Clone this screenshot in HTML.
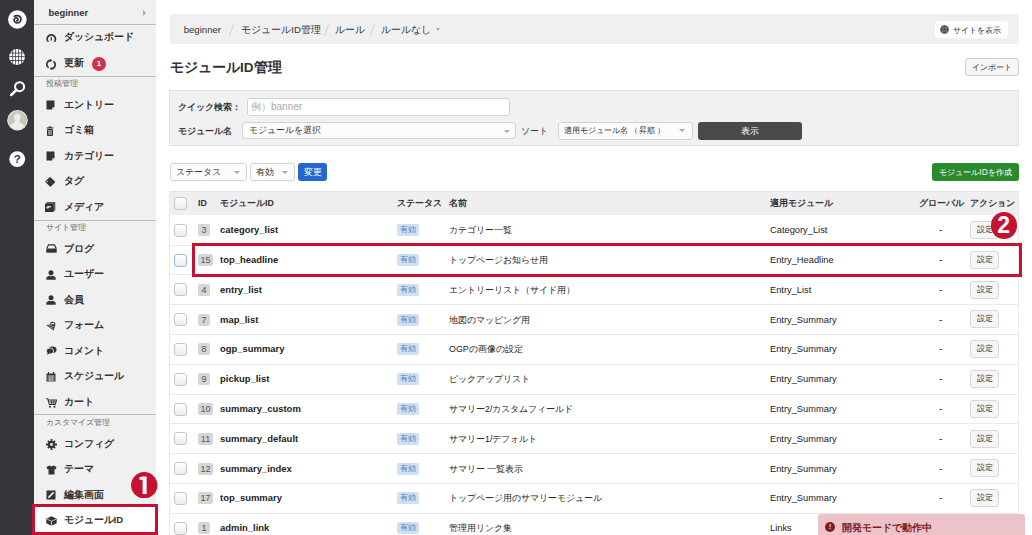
<!DOCTYPE html><html><head><meta charset="utf-8"><style>
*{box-sizing:border-box;margin:0;padding:0}
html,body{width:1032px;height:535px;overflow:hidden;background:#fff}
body{position:relative;font-family:"Liberation Sans",sans-serif;color:#333}
.a{position:absolute}
.bar{left:0;top:0;width:34px;height:535px;background:#36353b}
.side{left:34px;top:0;width:122px;height:535px;background:#f0f0f0}
.sline{left:34px;width:122px;height:1px;background:#bcbcbc}
.sitem{left:63.5px;font-size:9.6px;font-weight:bold;color:#333;line-height:14px;white-space:nowrap}
.slabel{left:45.5px;font-size:7.5px;color:#6a6a6a;line-height:10px;white-space:nowrap}
.sicon{left:46px;line-height:0}
.crumb{left:170px;top:14px;width:849px;height:30px;background:#f0f0f0;border-radius:3px}
.ctext{top:22px;font-size:9.6px;color:#333;line-height:14px;white-space:nowrap}
.sep{color:#c8c8c8}
.btn{border:1px solid #cfcfcf;background:#f6f6f6;border-radius:3px;font-size:8.4px;color:#333;text-align:center;white-space:nowrap}
.filter{left:169px;top:90px;width:850px;height:56px;background:#f1f1f1;border:1px solid #e3e3e3}
.inp{background:#fff;border:1px solid #d3d3d3;border-radius:3px}
.lbl{font-size:9.2px;color:#3a3a3a;font-weight:bold;line-height:14px;white-space:nowrap}
.sel{background:#fcfcfc;border:1px solid #d3d3d3;border-radius:3px;font-size:8.6px;color:#333;white-space:nowrap}
.arr{position:absolute;top:6.5px;width:0;height:0;border-left:3px solid transparent;border-right:3px solid transparent;border-top:3.5px solid #aaa}
.thead{left:169px;top:191px;width:850px;height:24.3px;background:#efefef;border-top:1px solid #e2e2e2}
.th{top:196px;font-size:8.9px;font-weight:bold;color:#333;line-height:14px;white-space:nowrap}
.rowline{left:169px;width:850px;height:1px;background:#e9e9e9}
.cb{left:174px;width:13px;height:13px;border:1px solid #c6c6c6;border-radius:3px;background:linear-gradient(#fff,#ececec)}
.idb{left:198px;height:12px;background:#d6d6d6;border-radius:2px;font-size:9px;color:#555;text-align:center;line-height:12px}
.mid{left:220px;font-size:9.45px;font-weight:bold;color:#222;line-height:14px;white-space:nowrap}
.badge{left:397px;width:22px;height:12px;background:#cfe0f4;border-radius:2px;font-size:8px;color:#4b80c4;text-align:center;line-height:12px}
.nm{left:449px;font-size:8.9px;color:#222;line-height:14px;white-space:nowrap}
.mod{left:770px;font-size:9.3px;color:#222;line-height:14px;white-space:nowrap}
.dash{left:939px;font-size:10px;color:#333;line-height:14px}
.set{left:970px;width:29px;height:18px;font-size:7.9px;line-height:16px;border-color:#d8d8d8}
.red{border:3px solid #c41230}
.num{width:26.5px;height:26.5px;border-radius:50%;background:#c41230;color:#fff;font-weight:bold;font-size:23px;text-align:center;line-height:27px}
</style></head><body>
<div class="a bar"></div>
<div class="a" style="left:8px;top:9.5px;line-height:0"><svg width="19" height="19" viewBox="0 0 19 19"><circle cx="9.35" cy="9.5" r="9.3" fill="#fff"/><path d="M6.3 6.2 C7.2 5.6 8.4 5.5 9.6 5.6 C11.7 5.8 13 7.6 12.9 9.7 C12.8 11.8 11.1 13.1 9.2 13 C7.3 12.9 6 11.5 6.1 9.8 C6.2 8.4 7.4 7.7 8.6 7.9 C9.7 8.1 10.3 9.1 10 10 C9.8 10.6 9.2 10.9 8.7 10.8" fill="none" stroke="#36353b" stroke-width="1.7" stroke-linecap="round"/></svg></div>
<div class="a" style="left:9px;top:48.5px;line-height:0"><svg width="16" height="16" viewBox="0 0 16 16"><defs><clipPath id="gc"><circle cx="8" cy="8" r="7.9"/></clipPath></defs><circle cx="8" cy="8" r="7.9" fill="#fff"/><g clip-path="url(#gc)" stroke="#36353b" stroke-width="0.8" fill="none"><path d="M0 4h16M0 7.6h16M0 11.5h16M3.7 0v16M6.6 0v16M9.6 0v16M12.5 0v16"/></g></svg></div>
<div class="a" style="left:9px;top:80px;line-height:0"><svg width="17" height="17" viewBox="0 0 17 17"><circle cx="10.55" cy="6.7" r="4.5" fill="none" stroke="#fff" stroke-width="2.1"/><path d="M7.5 9.8 L2.2 15" stroke="#fff" stroke-width="2.5" stroke-linecap="round"/></svg></div>
<div class="a" style="left:7px;top:110px;line-height:0"><svg width="21" height="21" viewBox="0 0 21 21"><defs><clipPath id="ac"><circle cx="10.5" cy="10.3" r="9.5"/></clipPath></defs><circle cx="10.5" cy="10.3" r="10.3" fill="#ebebe6"/><circle cx="10.5" cy="10.3" r="9.4" fill="#c7c7bc"/><g clip-path="url(#ac)" fill="#ededea"><ellipse cx="10.2" cy="7.3" rx="3.3" ry="3.8"/><path d="M8.2 10 L12.2 10 L12.6 12.5 C16 13.2 18 14.5 18 21 H3 C3 14.5 5 13.2 7.8 12.5Z"/></g></svg></div>
<div class="a" style="left:9px;top:151px;line-height:0"><svg width="17" height="17" viewBox="0 0 17 17"><circle cx="8.2" cy="8.2" r="7.9" fill="#fff"/><text x="8.3" y="12.4" text-anchor="middle" font-family="Liberation Sans" font-weight="bold" font-size="11.5" fill="#36353b">?</text></svg></div>
<div class="a side"></div>
<div class="a" style="left:48.5px;top:5.6px;font-size:9.4px;font-weight:bold;color:#333;line-height:14px">beginner</div>
<div class="a" style="left:143.3px;top:9.6px;width:0;height:0;border-top:3px solid transparent;border-bottom:3px solid transparent;border-left:3px solid #aaa"></div>
<div class="a" style="left:34px;top:507px;width:122px;height:28px;background:#fff"></div>
<div class="a sline" style="top:24.0px"></div>
<div class="a sicon" style="top:32.5px"><svg width="11" height="9" viewBox="0 0 11 9"><path d="M1.6 7.7 A4.1 4.1 0 1 1 9 7.7" fill="none" stroke="#333" stroke-width="1.7"/><path d="M0.8 8.1 H2.8 M7.8 8.1 H9.8" stroke="#333" stroke-width="1.4"/><path d="M5.3 4.2 V7.6" stroke="#333" stroke-width="1.3"/></svg></div>
<div class="a sitem" style="top:30.0px">ダッシュボード</div>
<div class="a sicon" style="top:58.5px"><svg width="10" height="11" viewBox="0 0 10 11"><path d="M5 1.3 A4 4 0 0 0 2.6 8.6" fill="none" stroke="#333" stroke-width="1.7"/><path d="M5 9.7 A4 4 0 0 0 7.4 2.4" fill="none" stroke="#333" stroke-width="1.7"/><path d="M4 0 L6.5 1.4 L4 2.8Z M6 11 L3.5 9.6 L6 8.2Z" fill="#333"/></svg></div>
<div class="a sitem" style="top:56.0px">更新</div>
<div class="a sline" style="top:76.0px"></div>
<div class="a slabel" style="top:79.0px">投稿管理</div>
<div class="a sicon" style="top:100.2px"><svg width="9" height="10" viewBox="0 0 9 10"><path d="M0.5 0.5h8v6.5l-2.5 2.5h-5.5z" fill="#333"/><path d="M6 9.5l2.5-2.5h-2.5z" fill="#aaa"/></svg></div>
<div class="a sitem" style="top:97.7px">エントリー</div>
<div class="a sicon" style="top:125.5px"><svg width="8" height="10" viewBox="0 0 8 10"><path d="M2.5 0.5h3v1h2v1h-7v-1h2z" fill="#333"/><rect x="1" y="3" width="6" height="7" rx="1" fill="#333"/><path d="M3 4v5M5 4v5" stroke="#f0f0f0" stroke-width="0.9"/></svg></div>
<div class="a sitem" style="top:123.0px">ゴミ箱</div>
<div class="a sicon" style="top:151.0px"><svg width="9" height="10" viewBox="0 0 9 10"><path d="M0.5 0.5h8v6.5l-2.5 2.5h-5.5z" fill="#333"/><path d="M6 9.5l2.5-2.5h-2.5z" fill="#aaa"/></svg></div>
<div class="a sitem" style="top:148.5px">カテゴリー</div>
<div class="a sicon" style="top:176.5px"><svg width="11" height="11" viewBox="0 0 11 11" style="overflow:visible;margin-left:-0.7px;margin-top:-0.5px"><path d="M0.4 5.2 L4.6 1.2 Q5 0.9 5.4 1.2 L10 5.6 Q10.3 6 10 6.4 L5.8 10.6 Q5.3 11 4.9 10.6 L0.4 6 Q0 5.6 0.4 5.2Z" fill="#333"/><circle cx="2.2" cy="5.5" r="0.7" fill="#ddd"/><path d="M3.5 4 L7.5 8 M5 2.8 L9 6.8" stroke="#4a4a4a" stroke-width="0.6"/></svg></div>
<div class="a sitem" style="top:174.0px">タグ</div>
<div class="a sicon" style="top:202.1px"><svg width="11" height="10" viewBox="0 0 11 10" style="overflow:visible;margin-left:-0.7px;margin-top:-0.3px"><path d="M0 2 L2 0 H10.3 V8 L8.3 10 H0Z" fill="#5a5a5a"/><rect x="0" y="2" width="8.3" height="8" fill="#333"/><path d="M1.5 6.5 C1.2 5 2 4 3.2 4 H6 V5.2 H4.2 C4 6.2 3 6.8 1.5 6.5Z" fill="#e6e6e6"/></svg></div>
<div class="a sitem" style="top:199.6px">メディア</div>
<div class="a sline" style="top:219.5px"></div>
<div class="a slabel" style="top:223.0px">サイト管理</div>
<div class="a sicon" style="top:244.2px"><svg width="11" height="9" viewBox="0 0 11 9"><path d="M0.8 4.5 L2.5 0.8 H8.5 L10.2 4.5" fill="none" stroke="#333" stroke-width="1.2"/><rect x="0.3" y="4.5" width="10.4" height="4.2" fill="#333"/></svg></div>
<div class="a sitem" style="top:241.7px">ブログ</div>
<div class="a sicon" style="top:269.5px"><svg width="10" height="10" viewBox="0 0 10 10"><circle cx="5" cy="2.8" r="2.5" fill="#333"/><path d="M0.3 9.8 V8.4 C0.3 6.8 2.5 6 3.8 5.8 L5 6.6 L6.2 5.8 C7.5 6 9.7 6.8 9.7 8.4 V9.8Z" fill="#333"/></svg></div>
<div class="a sitem" style="top:267.0px">ユーザー</div>
<div class="a sicon" style="top:295.0px"><svg width="10" height="10" viewBox="0 0 10 10"><circle cx="5" cy="2.8" r="2.5" fill="#333"/><path d="M0.3 9.8 V8.4 C0.3 6.8 2.5 6 3.8 5.8 L5 6.6 L6.2 5.8 C7.5 6 9.7 6.8 9.7 8.4 V9.8Z" fill="#333"/></svg></div>
<div class="a sitem" style="top:292.5px">会員</div>
<div class="a sicon" style="top:320.5px"><svg width="10" height="10" viewBox="0 0 10 10"><path d="M0.2 4 L9.6 3 L7.6 9.6 Z" fill="#333"/><path d="M2.5 4.6 L8.3 5.5 M4 6 L7.6 7.3" stroke="#f0f0f0" stroke-width="0.5"/><path d="M4.6 3.4 C4.4 1 8.4 0.4 8.9 2.9" fill="none" stroke="#333" stroke-width="1.1"/></svg></div>
<div class="a sitem" style="top:318.0px">フォーム</div>
<div class="a sicon" style="top:346.0px"><svg width="11" height="9" viewBox="0 0 11 9"><ellipse cx="6.5" cy="3.8" rx="4" ry="3.3" fill="#333"/><ellipse cx="4" cy="5" rx="3.6" ry="3" fill="#333" stroke="#f0f0f0" stroke-width="0.8"/><path d="M0.8 8.8 L2 6.5 L3.5 7.5Z" fill="#333"/></svg></div>
<div class="a sitem" style="top:343.5px">コメント</div>
<div class="a sicon" style="top:371.5px"><svg width="10" height="10" viewBox="0 0 10 10"><rect x="0.5" y="1.5" width="9" height="8" fill="#333"/><path d="M2.5 0v2.5M7.5 0v2.5" stroke="#333" stroke-width="1.2"/><path d="M1.3 4h7.4M1.3 6h7.4M1.3 8h7.4M3.3 3.5v6M5 3.5v6M6.8 3.5v6" stroke="#f0f0f0" stroke-width="0.6"/></svg></div>
<div class="a sitem" style="top:369.0px">スケジュール</div>
<div class="a sicon" style="top:397.5px"><svg width="11" height="10" viewBox="0 0 11 10"><path d="M0 0.8h1.8l1.5 5.7h6l1.2-4.5H2.5" fill="none" stroke="#333" stroke-width="1.1"/><path d="M3.5 3.3h6.3M4 4.8h5.5M5.5 2.5v4M7.5 2.5v4" stroke="#333" stroke-width="0.7"/><circle cx="4" cy="8.8" r="1" fill="#333"/><circle cx="8.5" cy="8.8" r="1" fill="#333"/></svg></div>
<div class="a sitem" style="top:395.0px">カート</div>
<div class="a sline" style="top:413.8px"></div>
<div class="a slabel" style="top:417.8px">カスタマイズ管理</div>
<div class="a sicon" style="top:439.1px"><svg width="11" height="11" viewBox="0 0 11 11"><g fill="#333"><circle cx="5.5" cy="5.5" r="3.6"/><path d="M4.6 0h1.8v11h-1.8zM0 4.6h11v1.8h-11z"/><path d="M1.3 2.6l1.3-1.3 7.1 7.1-1.3 1.3zM8.4 1.3l1.3 1.3-7.1 7.1-1.3-1.3z"/></g><circle cx="5.5" cy="5.5" r="1.4" fill="#f0f0f0"/></svg></div>
<div class="a sitem" style="top:436.6px">コンフィグ</div>
<div class="a sicon" style="top:464.5px"><svg width="11" height="10" viewBox="0 0 11 10"><path d="M3.5 0.5 L0.5 2 L1.5 4.5 L2.5 4 V9.5 H8.5 V4 L9.5 4.5 L10.5 2 L7.5 0.5 C7 1.5 4 1.5 3.5 0.5Z" fill="#333"/></svg></div>
<div class="a sitem" style="top:462.0px">テーマ</div>
<div class="a sicon" style="top:490.0px"><svg width="10" height="10" viewBox="0 0 10 10"><rect x="0.5" y="0.5" width="9" height="9" fill="#333"/><path d="M2 8 L2.3 6.5 L7 1.8 L8.2 3 L3.5 7.7Z" fill="#f0f0f0"/></svg></div>
<div class="a sitem" style="top:487.5px">編集画面</div>
<div class="a sicon" style="top:515.5px"><svg width="11" height="10" viewBox="0 0 11 10"><path d="M5.5 0.3 L10.7 2.8 V7.2 L5.5 9.7 L0.3 7.2 V2.8Z" fill="#333"/><path d="M0.8 3 L5.5 5.3 L10.2 3 M5.5 5.3 V9.5" fill="none" stroke="#f0f0f0" stroke-width="0.8"/></svg></div>
<div class="a sitem" style="top:513.0px">モジュールID</div>
<div class="a" style="left:92px;top:57px;width:14px;height:14px;border-radius:50%;background:#c8344c;color:#fff;font-size:8px;font-weight:bold;text-align:center;line-height:14px">1</div>
<div class="a crumb"></div>
<div class="a ctext" style="left:183.7px;top:22.5px">beginner</div>
<div class="a ctext" style="left:241.3px;top:22.5px">モジュールID管理</div>
<div class="a ctext" style="left:334.8px;top:22.5px">ルール</div>
<div class="a ctext" style="left:381.0px;top:22.5px">ルールなし</div>
<div class="a" style="left:229.3px;top:24px;line-height:0"><svg width="5" height="12" viewBox="0 0 5 12"><path d="M4.6 0.3 L0.4 11.7" stroke="#cfcfcf" stroke-width="0.9"/></svg></div>
<div class="a" style="left:324.2px;top:24px;line-height:0"><svg width="5" height="12" viewBox="0 0 5 12"><path d="M4.6 0.3 L0.4 11.7" stroke="#cfcfcf" stroke-width="0.9"/></svg></div>
<div class="a" style="left:369.8px;top:24px;line-height:0"><svg width="5" height="12" viewBox="0 0 5 12"><path d="M4.6 0.3 L0.4 11.7" stroke="#cfcfcf" stroke-width="0.9"/></svg></div>
<div class="a" style="left:435.5px;top:28px;width:0;height:0;border-left:2.5px solid transparent;border-right:2.5px solid transparent;border-top:3px solid #aaa"></div>
<div class="a" style="left:935px;top:21px;width:73px;height:17px;background:#fff;border-radius:3px"></div>
<div class="a" style="left:940px;top:24.5px;line-height:0"><svg width="9" height="9" viewBox="0 0 9 9"><circle cx="4.5" cy="4.5" r="4.3" fill="#444"/><path d="M0 3h9M0 6h9M3 0v9M6 0v9" stroke="#aaa" stroke-width="0.5"/></svg></div>
<div class="a" style="left:953px;top:22.5px;font-size:8.4px;color:#333;line-height:14px;white-space:nowrap">サイトを表示</div>
<div class="a" style="left:170px;top:58.5px;font-size:13.6px;font-weight:bold;color:#333;line-height:18px;white-space:nowrap">モジュールID管理</div>
<div class="a btn" style="left:965px;top:58px;width:54px;height:18px;line-height:16px">インポート</div>
<div class="a filter"></div>
<div class="a lbl" style="left:178px;top:100px">クイック検索：</div>
<div class="a inp" style="left:247px;top:98px;width:263px;height:18px"></div>
<div class="a" style="left:251px;top:100px;font-size:10px;color:#aaa;line-height:14px;white-space:nowrap">例）banner</div>
<div class="a lbl" style="left:178px;top:123.5px">モジュール名</div>
<div class="a sel" style="left:242px;top:122px;width:274px;height:17px;padding-left:6px;line-height:15px">モジュールを選択<span class="arr" style="left:261px"></span></div>
<div class="a lbl" style="left:521px;top:123.5px;font-weight:normal">ソート</div>
<div class="a sel" style="left:558px;top:121.5px;width:135px;height:18px;padding-left:5px;line-height:16px;font-size:8.2px;font-weight:500">適用モジュール名&thinsp;（&thinsp;昇順&thinsp;）<span class="arr" style="left:120px"></span></div>
<div class="a" style="left:698px;top:121.5px;width:104px;height:18px;background:#4a4a4a;border-radius:3px;color:#fff;font-size:9px;text-align:center;line-height:18px">表示</div>
<div class="a sel" style="left:170px;top:163px;width:77px;height:18px;padding-left:5px;line-height:16px">ステータス<span class="arr" style="left:63px"></span></div>
<div class="a sel" style="left:250px;top:163px;width:45px;height:18px;padding-left:5px;line-height:16px">有効<span class="arr" style="left:31px"></span></div>
<div class="a" style="left:298px;top:163px;width:29px;height:18px;background:#2368d0;border-radius:3px;color:#fff;font-size:9px;text-align:center;line-height:18px">変更</div>
<div class="a" style="left:932px;top:163px;width:87px;height:18px;background:#2b8a2e;border-radius:3px;color:#fff;font-size:8.3px;text-align:center;line-height:18px;white-space:nowrap">モジュールIDを作成</div>
<div class="a thead"></div>
<div class="a" style="left:169px;top:191px;width:1px;height:344px;background:#ebebeb"></div>
<div class="a" style="left:1018px;top:191px;width:1px;height:344px;background:#ebebeb"></div>
<div class="a cb" style="top:197px"></div>
<div class="a th" style="left:198px">ID</div>
<div class="a th" style="left:220px">モジュールID</div>
<div class="a th" style="left:397px">ステータス</div>
<div class="a th" style="left:449px">名前</div>
<div class="a th" style="left:770px">適用モジュール</div>
<div class="a th" style="left:919px">グローバル</div>
<div class="a th" style="left:970px">アクション</div>
<div class="a rowline" style="top:244.6px"></div>
<div class="a cb" style="top:223.7px"></div>
<div class="a idb" style="top:224.2px;width:12px">3</div>
<div class="a mid" style="top:223.2px">category_list</div>
<div class="a badge" style="top:224.2px">有効</div>
<div class="a nm" style="top:223.2px">カテゴリー一覧</div>
<div class="a mod" style="top:223.2px">Category_List</div>
<div class="a dash" style="top:223.2px">-</div>
<div class="a btn set" style="top:221.0px">設定</div>
<div class="a rowline" style="top:274.4px"></div>
<div class="a cb" style="top:253.5px;border-color:#8fbce8"></div>
<div class="a idb" style="top:254.0px;width:15px">15</div>
<div class="a mid" style="top:253.0px">top_headline</div>
<div class="a badge" style="top:254.0px">有効</div>
<div class="a nm" style="top:253.0px">トップページお知らせ用</div>
<div class="a mod" style="top:253.0px">Entry_Headline</div>
<div class="a dash" style="top:253.0px">-</div>
<div class="a btn set" style="top:250.8px">設定</div>
<div class="a rowline" style="top:304.2px"></div>
<div class="a cb" style="top:283.3px"></div>
<div class="a idb" style="top:283.8px;width:12px">4</div>
<div class="a mid" style="top:282.8px">entry_list</div>
<div class="a badge" style="top:283.8px">有効</div>
<div class="a nm" style="top:282.8px">エントリーリスト（サイド用）</div>
<div class="a mod" style="top:282.8px">Entry_List</div>
<div class="a dash" style="top:282.8px">-</div>
<div class="a btn set" style="top:280.6px">設定</div>
<div class="a rowline" style="top:334.0px"></div>
<div class="a cb" style="top:313.1px"></div>
<div class="a idb" style="top:313.6px;width:12px">7</div>
<div class="a mid" style="top:312.6px">map_list</div>
<div class="a badge" style="top:313.6px">有効</div>
<div class="a nm" style="top:312.6px">地図のマッピング用</div>
<div class="a mod" style="top:312.6px">Entry_Summary</div>
<div class="a dash" style="top:312.6px">-</div>
<div class="a btn set" style="top:310.4px">設定</div>
<div class="a rowline" style="top:363.8px"></div>
<div class="a cb" style="top:342.9px"></div>
<div class="a idb" style="top:343.4px;width:12px">8</div>
<div class="a mid" style="top:342.4px">ogp_summary</div>
<div class="a badge" style="top:343.4px">有効</div>
<div class="a nm" style="top:342.4px">OGPの画像の設定</div>
<div class="a mod" style="top:342.4px">Entry_Summary</div>
<div class="a dash" style="top:342.4px">-</div>
<div class="a btn set" style="top:340.2px">設定</div>
<div class="a rowline" style="top:393.6px"></div>
<div class="a cb" style="top:372.7px"></div>
<div class="a idb" style="top:373.2px;width:12px">9</div>
<div class="a mid" style="top:372.2px">pickup_list</div>
<div class="a badge" style="top:373.2px">有効</div>
<div class="a nm" style="top:372.2px">ピックアップリスト</div>
<div class="a mod" style="top:372.2px">Entry_Summary</div>
<div class="a dash" style="top:372.2px">-</div>
<div class="a btn set" style="top:370.0px">設定</div>
<div class="a rowline" style="top:423.4px"></div>
<div class="a cb" style="top:402.5px"></div>
<div class="a idb" style="top:403.0px;width:15px">10</div>
<div class="a mid" style="top:402.0px">summary_custom</div>
<div class="a badge" style="top:403.0px">有効</div>
<div class="a nm" style="top:402.0px">サマリー2/カスタムフィールド</div>
<div class="a mod" style="top:402.0px">Entry_Summary</div>
<div class="a dash" style="top:402.0px">-</div>
<div class="a btn set" style="top:399.8px">設定</div>
<div class="a rowline" style="top:453.2px"></div>
<div class="a cb" style="top:432.3px"></div>
<div class="a idb" style="top:432.8px;width:15px">11</div>
<div class="a mid" style="top:431.8px">summary_default</div>
<div class="a badge" style="top:432.8px">有効</div>
<div class="a nm" style="top:431.8px">サマリー1/デフォルト</div>
<div class="a mod" style="top:431.8px">Entry_Summary</div>
<div class="a dash" style="top:431.8px">-</div>
<div class="a btn set" style="top:429.6px">設定</div>
<div class="a rowline" style="top:483.0px"></div>
<div class="a cb" style="top:462.1px"></div>
<div class="a idb" style="top:462.6px;width:15px">12</div>
<div class="a mid" style="top:461.6px">summary_index</div>
<div class="a badge" style="top:462.6px">有効</div>
<div class="a nm" style="top:461.6px">サマリー 一覧表示</div>
<div class="a mod" style="top:461.6px">Entry_Summary</div>
<div class="a dash" style="top:461.6px">-</div>
<div class="a btn set" style="top:459.4px">設定</div>
<div class="a rowline" style="top:512.8px"></div>
<div class="a cb" style="top:491.9px"></div>
<div class="a idb" style="top:492.4px;width:15px">17</div>
<div class="a mid" style="top:491.4px">top_summary</div>
<div class="a badge" style="top:492.4px">有効</div>
<div class="a nm" style="top:491.4px">トップページ用のサマリーモジュール</div>
<div class="a mod" style="top:491.4px">Entry_Summary</div>
<div class="a dash" style="top:491.4px">-</div>
<div class="a btn set" style="top:489.2px">設定</div>
<div class="a rowline" style="top:542.6px"></div>
<div class="a cb" style="top:521.7px"></div>
<div class="a idb" style="top:522.2px;width:12px">1</div>
<div class="a mid" style="top:521.2px">admin_link</div>
<div class="a badge" style="top:522.2px">有効</div>
<div class="a nm" style="top:521.2px">管理用リンク集</div>
<div class="a mod" style="top:521.2px">Links</div>
<div class="a dash" style="top:521.2px">-</div>
<div class="a btn set" style="top:519.0px">設定</div>
<div class="a red" style="left:192px;top:243px;width:830px;height:34px"></div>
<div class="a red" style="left:32px;top:504px;width:126px;height:31px"></div>
<div class="a num" style="left:990.5px;top:212.3px">2</div>
<div class="a" style="left:131.4px;top:471.6px;line-height:0"><svg width="26.5" height="26.5" viewBox="0 0 26.5 26.5"><circle cx="13.25" cy="13.25" r="13.2" fill="#c41230"/><path d="M11.6 4.6 H15.6 V22.1 H11.6 V7.7 H8.5 V5.1 C10 5.1 11.2 4.9 11.6 4.6Z" fill="#fff"/></svg></div>
<div class="a" style="left:818px;top:514px;width:207px;height:30px;background:#ebc3c8;border-radius:3px"></div>
<div class="a" style="left:825px;top:521.8px;width:10px;height:10px;border-radius:50%;background:#7e1a2a;color:#ebc3c8;font-size:8px;font-weight:bold;text-align:center;line-height:10px">!</div>
<div class="a" style="left:842px;top:520.8px;font-size:9.6px;font-weight:bold;color:#7e1a2a;line-height:14px;white-space:nowrap">開発モードで動作中</div>
</body></html>
